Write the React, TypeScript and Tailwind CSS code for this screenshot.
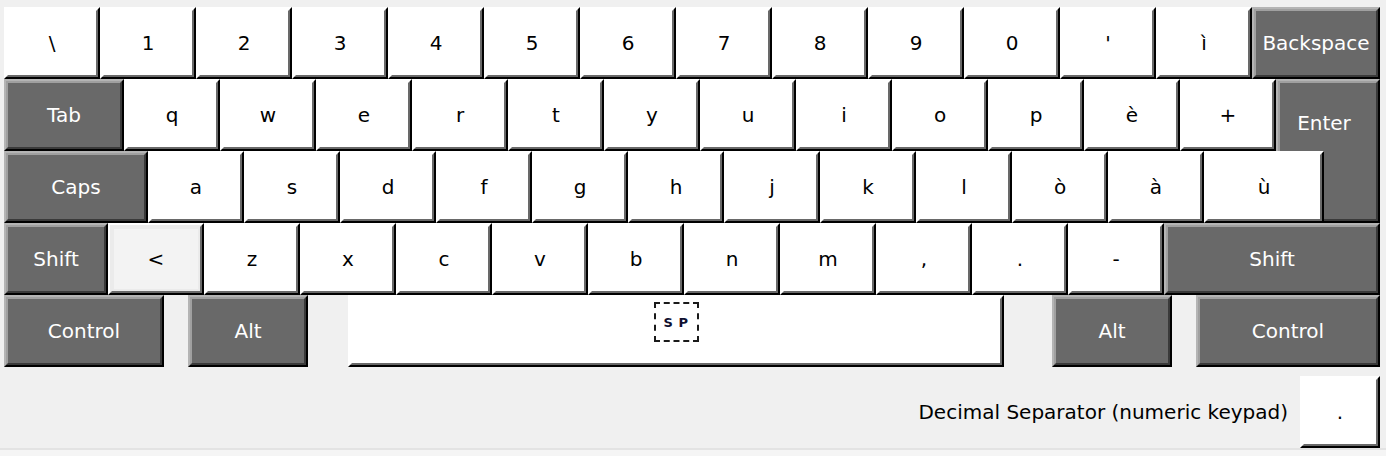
import React from "react";

type Variant = "light" | "dark" | "hover";

function Key({
  w,
  label,
  variant = "light",
  h = "h-[72px]",
  innerClass = "items-center justify-center",
  children,
}: {
  w: string;
  label?: string;
  variant?: Variant;
  h?: string;
  innerClass?: string;
  children?: React.ReactNode;
}) {
  const outer =
    variant === "dark"
      ? "border-t-[#b4b4b4] border-l-[#b4b4b4]"
      : "border-t-white border-l-white";
  const inner =
    variant === "dark"
      ? "bg-[#696969] border-t-[#a0a0a0] border-l-[#a0a0a0] border-b-[#3a3a3a] border-r-[#3a3a3a] text-white"
      : variant === "hover"
      ? "bg-[#ebebeb] border-t-[#ebebeb] border-l-[#ebebeb] border-b-[#696969] border-r-[#696969] text-black"
      : "bg-white border-t-white border-l-white border-b-[#696969] border-r-[#696969] text-black";
  return (
    <div
      className={`${w} ${h} shrink-0 border-2 border-b-black border-r-black ${outer}`}
    >
      <div className={`h-full w-full border-2 flex ${inner} ${innerClass}`}>
        {variant === "hover" ? (
          <div className="h-full w-full border-2 border-[#ebebeb] bg-[#f3f3f3] flex items-center justify-center">
            <span className="leading-none">{label}</span>
          </div>
        ) : (
          children ?? <span className="leading-none">{label}</span>
        )}
      </div>
    </div>
  );
}

const row1 = ["\\", "1", "2", "3", "4", "5", "6", "7", "8", "9", "0", "'", "ì"];
const row2 = ["q", "w", "e", "r", "t", "y", "u", "i", "o", "p", "è", "+"];
const row3 = ["a", "s", "d", "f", "g", "h", "j", "k", "l", "ò", "à"];
const row4 = ["z", "x", "c", "v", "b", "n", "m", ",", ".", "-"];

export default function App() {
  return (
    <div
      className="w-[1386px] h-[456px] bg-[#f0f0f0] overflow-hidden flex flex-col text-[20px]"
      style={{ fontFamily: '"DejaVu Sans", Verdana, sans-serif' }}
    >
      <div className="pt-[7px] pl-[4px] flex flex-col">
        {/* Row 1 */}
        <div className="flex">
          {row1.map((k, i) => (
            <Key key={i} w="w-[96px]" label={k} />
          ))}
          <Key w="w-[128px]" label="Backspace" variant="dark" />
        </div>

        {/* Rows 2-3 with Enter */}
        <div className="grid grid-cols-[1272px_104px] grid-rows-[72px_72px]">
          <div className="col-start-1 row-start-1 flex">
            <Key w="w-[120px]" label="Tab" variant="dark" />
            {row2.map((k, i) => (
              <Key key={i} w="w-[96px]" label={k} />
            ))}
          </div>
          <div className="col-start-2 row-start-1 row-span-2">
            <Key
              w="w-[104px]"
              h="h-[144px]"
              variant="dark"
              innerClass="items-start justify-center"
            >
              <span className="mt-[28px] mr-[8px] leading-[24px]">Enter</span>
            </Key>
          </div>
          <div className="col-start-1 row-start-2 flex w-[1320px] relative z-10">
            <Key w="w-[144px]" label="Caps" variant="dark" />
            {row3.map((k, i) => (
              <Key key={i} w="w-[96px]" label={k} />
            ))}
            <Key w="w-[120px]" label="ù" />
          </div>
        </div>

        {/* Row 4 */}
        <div className="flex">
          <Key w="w-[104px]" label="Shift" variant="dark" />
          <Key w="w-[96px]" label="<" variant="hover" />
          {row4.map((k, i) => (
            <Key key={i} w="w-[96px]" label={k} />
          ))}
          <Key w="w-[216px]" label="Shift" variant="dark" />
        </div>

        {/* Row 5 */}
        <div className="flex">
          <Key w="w-[160px]" label="Control" variant="dark" />
          <div className="w-[24px] shrink-0" />
          <Key w="w-[120px]" label="Alt" variant="dark" />
          <div className="w-[40px] shrink-0" />
          <Key w="w-[656px]" innerClass="items-start justify-center">
            <div className="mt-[3px] w-[45px] h-[40px] border-2 border-dashed border-[#1a1a1a] flex items-center justify-center">
              <span className="text-[13px] font-bold leading-none text-[#101030] tracking-[0.5px]">
                S P
              </span>
            </div>
          </Key>
          <div className="w-[48px] shrink-0" />
          <Key w="w-[120px]" label="Alt" variant="dark" />
          <div className="w-[24px] shrink-0" />
          <Key w="w-[184px]" label="Control" variant="dark" />
        </div>
      </div>

      {/* Bottom row */}
      <div className="mt-[9px] pr-[6px] flex items-center justify-end">
        <span className="text-black mr-[12px] leading-none">
          Decimal Separator (numeric keypad)
        </span>
        <Key w="w-[80px]" label="." />
      </div>
      <div className="flex-1 border-t-2 border-[#e3e3e3] bg-[#f5f5f5]" />
    </div>
  );
}
